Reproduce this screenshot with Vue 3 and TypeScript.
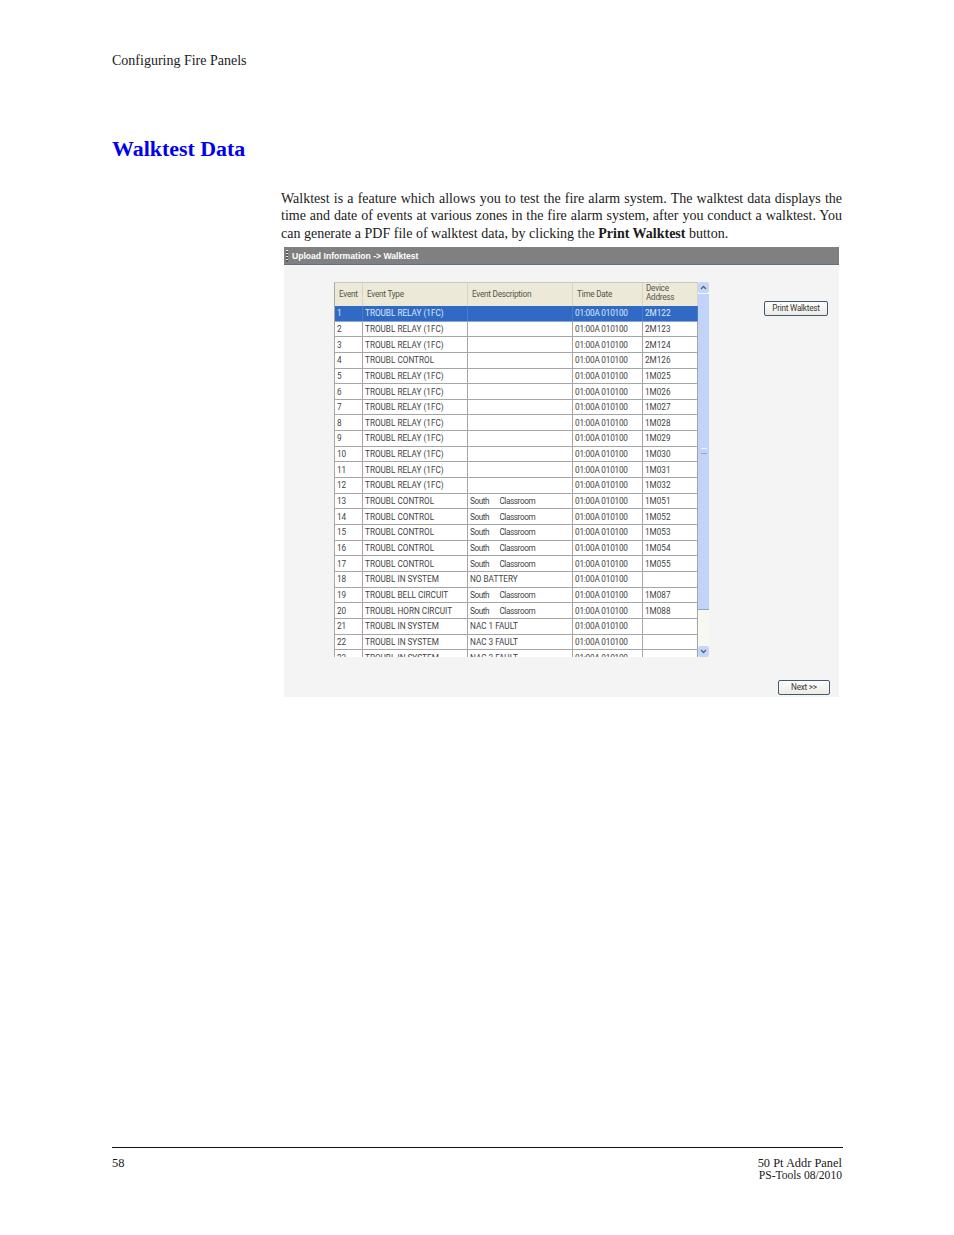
<script setup lang="ts">
interface Row { id: number; type: string; desc: string; addr: string }
const R = 'TROUBL RELAY (1FC)'
const C = 'TROUBL CONTROL'
const S = 'TROUBL IN SYSTEM'
const room = 'South     Classroom'
const rows: Row[] = [
  { id: 1, type: R, desc: '', addr: '2M122' },
  { id: 2, type: R, desc: '', addr: '2M123' },
  { id: 3, type: R, desc: '', addr: '2M124' },
  { id: 4, type: C, desc: '', addr: '2M126' },
  { id: 5, type: R, desc: '', addr: '1M025' },
  { id: 6, type: R, desc: '', addr: '1M026' },
  { id: 7, type: R, desc: '', addr: '1M027' },
  { id: 8, type: R, desc: '', addr: '1M028' },
  { id: 9, type: R, desc: '', addr: '1M029' },
  { id: 10, type: R, desc: '', addr: '1M030' },
  { id: 11, type: R, desc: '', addr: '1M031' },
  { id: 12, type: R, desc: '', addr: '1M032' },
  { id: 13, type: C, desc: room, addr: '1M051' },
  { id: 14, type: C, desc: room, addr: '1M052' },
  { id: 15, type: C, desc: room, addr: '1M053' },
  { id: 16, type: C, desc: room, addr: '1M054' },
  { id: 17, type: C, desc: room, addr: '1M055' },
  { id: 18, type: S, desc: 'NO BATTERY', addr: '' },
  { id: 19, type: 'TROUBL BELL CIRCUIT', desc: room, addr: '1M087' },
  { id: 20, type: 'TROUBL HORN CIRCUIT', desc: room, addr: '1M088' },
  { id: 21, type: S, desc: 'NAC 1 FAULT', addr: '' },
  { id: 22, type: S, desc: 'NAC 3 FAULT', addr: '' },
  { id: 23, type: S, desc: 'NAC 3 FAULT', addr: '' },
]
</script>

<template>
  <div class="page">
    <header class="running">Configuring Fire Panels</header>
    <h1 class="title">Walktest Data</h1>
    <main class="content">
      <p class="intro">
        <span class="line">Walktest is a feature which allows you to test the fire alarm system. The walktest data displays the</span>
        <span class="line">time and date of events at various zones in the fire alarm system, after you conduct a walktest. You</span>
        <span class="line last">can generate a PDF file of walktest data, by clicking the <b>Print Walktest</b> button.</span>
      </p>
      <section class="panel">
        <div class="titlebar">
          <span class="grip"></span>
          <span>Upload Information -&gt; Walktest</span>
        </div>
        <div class="panel-body">
          <div class="list-wrap">
            <div class="list">
              <div class="row head">
                <div class="cell">Event</div>
                <div class="cell">Event Type</div>
                <div class="cell">Event Description</div>
                <div class="cell">Time Date</div>
                <div class="cell two">Device<br />Address</div>
              </div>
              <div class="list-rows">
                <div v-for="r in rows" :key="r.id" class="row" :class="{ sel: r.id === 1 }">
                  <div class="cell">{{ r.id }}</div>
                  <div class="cell">{{ r.type }}</div>
                  <div class="cell pre" :class="{ room: r.desc === room }">{{ r.desc }}</div>
                  <div class="cell time">01:00A 010100</div>
                  <div class="cell">{{ r.addr }}</div>
                </div>
              </div>
            </div>
            <div class="scrollbar">
              <div class="sb-btn">
                <svg width="7" height="5" viewBox="0 0 7 5"><path d="M1 4 3.5 1.5 6 4" fill="none" stroke="#4d6185" stroke-width="1.3" /></svg>
              </div>
              <div class="sb-thumb"><span class="sb-grip"></span></div>
              <div class="sb-track"></div>
              <div class="sb-btn">
                <svg width="7" height="5" viewBox="0 0 7 5"><path d="M1 1 3.5 3.5 6 1" fill="none" stroke="#4d6185" stroke-width="1.3" /></svg>
              </div>
            </div>
          </div>
          <button class="btn print" type="button">Print Walktest</button>
          <button class="btn next" type="button">Next &gt;&gt;</button>
        </div>
      </section>
    </main>
    <footer class="foot">
      <span class="pageno">58</span>
      <div class="foot-right">
        <div>50 Pt Addr Panel</div>
        <div class="small">PS-Tools 08/2010</div>
      </div>
    </footer>
  </div>
</template>

<style>
html, body { margin: 0; background: #fff; }
</style>

<style scoped>
.page {
  box-sizing: border-box;
  height: 1235px;
  width: 954px;
  padding: 53px 111px 0 112px;
  display: flex;
  flex-direction: column;
  font-family: "Liberation Serif", serif;
  color: #1a1a1a;
  background: #fff;
  overflow: hidden;
}
.running { font-size: 14px; line-height: 15px; }
.title {
  margin: 66px 0 0;
  font-size: 21.9px;
  line-height: 30px;
  font-weight: 700;
  color: #0000ee;
}
.content { margin-left: 169px; margin-top: 26px; }
.intro {
  margin: 0;
  padding-right: 1px;
  font-size: 14px;
  line-height: 17.3px;
}
.line {
  display: block;
  white-space: nowrap;
  text-align: justify;
  text-align-last: justify;
}
.line.last { text-align-last: left; }
.panel {
  width: 555px;
  margin: 5px 0 0 3px;
  background: #f4f4f4;
  font-family: "Liberation Sans", sans-serif;
}
.titlebar {
  box-sizing: border-box;
  height: 18px;
  background: #808080;
  border-bottom: 1px solid #5f6f8c;
  display: flex;
  align-items: center;
  gap: 4px;
  padding: 1px 0 0 2px;
  color: #fff;
  font-size: 8.6px;
  font-weight: 700;
}
.grip {
  width: 2px;
  height: 12px;
  background: repeating-linear-gradient(to bottom, #e8e8e8 0 1px, #5a5a5a 1px 3px);
}
.panel-body {
  display: grid;
  grid-template-columns: 375px 1fr;
  padding: 17px 9px 2px 50px;
}
.list-wrap { display: flex; height: 375px; }
.list {
  box-sizing: border-box;
  width: 364px;
  height: 375px;
  border-left: 1px solid #a8a8a8;
  border-top: 1px solid #c8c8c0;
  display: flex;
  flex-direction: column;
  overflow: hidden;
  background: #fff;
  font-family: Roboto, "Liberation Sans", sans-serif;
  font-size: 8.2px;
  letter-spacing: 0;
  color: #444;
}
.list-rows { flex: none; }
.row {
  display: grid;
  grid-template-columns: 28px 105px 105px 70px 55px;
  height: 15.67px;
  box-sizing: border-box;
  border-bottom: 1px solid #a6a6a6;
}
.row.head {
  flex: none;
  height: 23px;
  background: #ece9d8;
  border-bottom: none;
  color: #55554a;
  letter-spacing: -0.25px;
}
.head .cell { padding-left: 4px; border-right: 1px solid #d8d5c4; }
.head .two { line-height: 9px; padding-left: 3px; }
.cell {
  box-sizing: border-box;
  padding-left: 2px;
  border-right: 1px solid #a6a6a6;
  display: flex;
  align-items: center;
  white-space: nowrap;
  overflow: hidden;
  line-height: 14px;
}
.cell.two { display: block; white-space: normal; padding-top: 1px; }
.pre { white-space: pre; }
.room { letter-spacing: -0.4px; word-spacing: 0.4px; }
.time { letter-spacing: -0.2px; }
.row.sel { background: #316ac5; color: #dfe8f8; border-bottom-color: #8fa6cc; }
.row.sel .cell { border-right-color: #4a7bc9; }
.scrollbar {
  width: 11px;
  height: 375px;
  display: flex;
  flex-direction: column;
  background: #f8f8f3;
}
.sb-btn {
  flex: none;
  height: 11px;
  background: #c6d6f8;
  border-radius: 2px;
  display: flex;
  align-items: center;
  justify-content: center;
}
.sb-thumb {
  flex: none;
  height: 316px;
  margin-top: 1px;
  background: #c2d3f9;
  border-bottom: 1px solid #8aa5d8;
  box-sizing: border-box;
  display: flex;
  align-items: center;
  justify-content: center;
}
.sb-grip {
  width: 6px;
  height: 4px;
  border-top: 1px solid #eef3fe;
  border-bottom: 1px solid #8aa5d8;
}
.sb-track { flex: 1; }
.btn {
  box-sizing: border-box;
  padding: 0;
  font-family: Roboto, "Liberation Sans", sans-serif;
  font-size: 8.2px;
  letter-spacing: -0.25px;
  color: #3a3a3a;
  background: linear-gradient(#fdfdfb, #ecebe3);
  border: 1px solid #3f5a78;
  border-radius: 2px;
  height: 15px;
}
.print { width: 64px; justify-self: end; align-self: start; margin: 19px 2px 0 0; }
.next { grid-column: 2; grid-row: 2; width: 52px; justify-self: end; margin-top: 23px; }
.foot {
  margin-top: auto;
  margin-bottom: 54px;
  border-top: 1px solid #111;
  display: flex;
  justify-content: space-between;
  padding: 9px 1px 0 0;
  font-size: 12.4px;
  line-height: 13px;
}
.foot-right { text-align: right; }
.small { font-size: 11.6px; line-height: 11px; }
</style>
